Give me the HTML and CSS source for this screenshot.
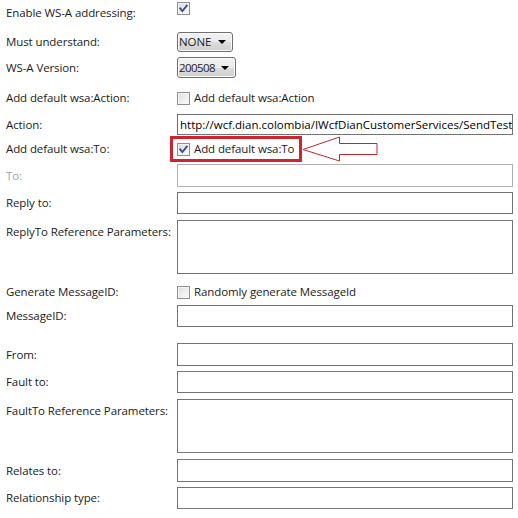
FILE: index.html
```html
<!DOCTYPE html>
<html>
<head>
<meta charset="utf-8">
<link rel="stylesheet" href="styles.css">
</head>
<body>
<div class="form">
  <div class="row r1">
    <div class="label">Enable WS-A addressing:</div>
    <div class="field"><span class="cb"><svg viewBox="0 0 13 13"><path d="M3.2 6.4 L5.4 9 L9.8 3.6"/></svg></span></div>
  </div>
  <div class="row r2">
    <div class="label">Must understand:</div>
    <div class="field"><span class="select w56">NONE<i class="tri"></i></span></div>
  </div>
  <div class="row r3">
    <div class="label">WS-A Version:</div>
    <div class="field"><span class="select w59">200508<i class="tri"></i></span></div>
  </div>
  <div class="row r4">
    <div class="label">Add default wsa:Action:</div>
    <div class="field"><span class="cb"></span><span class="cbtext">Add default wsa:Action</span></div>
  </div>
  <div class="row r5">
    <div class="label">Action:</div>
    <div class="field"><div class="input h21 text">http://wcf.dian.colombia/IWcfDianCustomerServices/SendTest</div></div>
  </div>
  <div class="row r6">
    <div class="label">Add default wsa:To:</div>
    <div class="field annotated">
      <span class="cb"><svg viewBox="0 0 13 13"><path d="M3.2 6.4 L5.4 9 L9.8 3.6"/></svg></span><span class="cbtext">Add default wsa:To</span>
      <span class="redbox"></span>
      <svg class="arrow" viewBox="0 0 80 27" width="80" height="27"><polygon points="1,13.5 37.5,1 37.5,7.5 75,7.5 75,18.5 37.5,18.5 37.5,25"/></svg>
    </div>
  </div>
  <div class="row r7">
    <div class="label disabled">To:</div>
    <div class="field"><div class="input h23 dis"></div></div>
  </div>
  <div class="row r8">
    <div class="label">Reply to:</div>
    <div class="field"><div class="input h22"></div></div>
  </div>
  <div class="row r9 tall">
    <div class="label">ReplyTo Reference Parameters:</div>
    <div class="field"><div class="input h54"></div></div>
  </div>
  <div class="row r10">
    <div class="label">Generate MessageID:</div>
    <div class="field"><span class="cb"></span><span class="cbtext">Randomly generate MessageId</span></div>
  </div>
  <div class="row r11">
    <div class="label">MessageID:</div>
    <div class="field"><div class="input h22"></div></div>
  </div>
  <div class="row r12">
    <div class="label">From:</div>
    <div class="field"><div class="input h23"></div></div>
  </div>
  <div class="row r13">
    <div class="label">Fault to:</div>
    <div class="field"><div class="input h22"></div></div>
  </div>
  <div class="row r14 tall">
    <div class="label">FaultTo Reference Parameters:</div>
    <div class="field"><div class="input h54"></div></div>
  </div>
  <div class="row r15">
    <div class="label">Relates to:</div>
    <div class="field"><div class="input h23"></div></div>
  </div>
  <div class="row r16">
    <div class="label">Relationship type:</div>
    <div class="field"><div class="input h22"></div></div>
  </div>
</div>
</body>
</html>
```
FILE: styles.css
```css
html, body {
  margin: 0;
  padding: 0;
  background: #ffffff;
}
body {
  font-family: "Open Sans", "Noto Sans", "Liberation Sans", sans-serif;
  font-size: 11.5px;
  letter-spacing: -0.1px;
  color: #1b1b1b;
  width: 518px;
  height: 518px;
  overflow: hidden;
}
.form {
  display: flex;
  flex-direction: column;
  padding-left: 6px;
}
.row {
  display: grid;
  grid-template-columns: 171px 336px;
  align-items: center;
}
.row.tall {
  align-items: start;
}
.row.tall .label {
  padding-top: 4px;
}
.label {
  line-height: 16px;
  white-space: nowrap;
}
.label.disabled {
  color: #a3a3a3;
}
.field {
  display: flex;
  align-items: center;
  position: relative;
}
.r1 { height: 26px; }
.r1 .field { align-self: start; padding-top: 2px; }
.r2 { margin-top: 6px; height: 20px; }
.r3 { margin-top: 5px; height: 21px; }
.r4 { margin-top: 12px; height: 16px; }
.r5 { margin-top: 8px; height: 21px; }
.r6 { margin-top: 1px; height: 26px; }
.r6 .field { align-self: stretch; }
.r7 { margin-top: 2px; height: 23px; }
.r8 { margin-top: 5px; height: 22px; }
.r9 { margin-top: 6px; height: 54px; }
.r10 { margin-top: 10px; height: 16px; }
.r11 { margin-top: 5px; height: 22px; }
.r12 { margin-top: 16px; height: 23px; }
.r13 { margin-top: 5px; height: 22px; }
.r14 { margin-top: 6px; height: 54px; }
.r15 { margin-top: 6px; height: 23px; }
.r16 { margin-top: 5px; height: 22px; }

.cb {
  width: 13px;
  height: 13px;
  box-sizing: border-box;
  border: 1px solid #8e8f8f;
  background: linear-gradient(135deg, #dcdcdc 0%, #f0f0f0 60%, #fbfbfb 100%);
  box-shadow: inset 0 0 0 1px #f3f3f3;
  display: inline-block;
  position: relative;
  flex: none;
}
.cb svg {
  position: absolute;
  left: -1px;
  top: -1px;
  width: 13px;
  height: 13px;
}
.cb svg path {
  fill: none;
  stroke: #3c4f87;
  stroke-width: 1.9;
  stroke-linecap: square;
}
.cbtext {
  margin-left: 4px;
  line-height: 16px;
  white-space: nowrap;
}
.select {
  box-sizing: border-box;
  height: 100%;
  border: 1px solid #707070;
  border-radius: 3px;
  background: linear-gradient(to bottom, #f2f2f2 0%, #ebebeb 50%, #dddddd 51%, #cfcfcf 100%);
  box-shadow: inset 0 0 0 1px #fcfcfc;
  display: flex;
  align-items: center;
  padding-left: 1px;
  line-height: 16px;
  color: #1b1b1b;
  position: relative;
}
.w56 { width: 56px; }
.w59 { width: 59px; letter-spacing: -0.6px; }
.tri {
  position: absolute;
  right: 6px;
  top: 50%;
  margin-top: -2px;
  width: 0;
  height: 0;
  border-left: 4px solid transparent;
  border-right: 4px solid transparent;
  border-top: 4px solid #000;
}
.r2 .field, .r3 .field { height: 100%; }
.input {
  box-sizing: border-box;
  width: 336px;
  border: 1px solid #737373;
  background: #fff;
}
.input.dis { border-color: #b1b1b1; }
.h21 { height: 21px; }
.h22 { height: 22px; }
.h23 { height: 23px; }
.h54 { height: 54px; }
.text {
  padding-left: 2px;
  line-height: 19px;
  letter-spacing: 0;
  white-space: nowrap;
  overflow: hidden;
  color: #000;
}
.redbox {
  position: absolute;
  left: -7px;
  top: 0;
  width: 132px;
  height: 26px;
  box-sizing: border-box;
  border: 3px solid #d0232d;
}
.arrow {
  position: absolute;
  left: 125px;
  top: 0;
}
.arrow polygon {
  fill: none;
  stroke: #c3262d;
  stroke-width: 1;
}
```
